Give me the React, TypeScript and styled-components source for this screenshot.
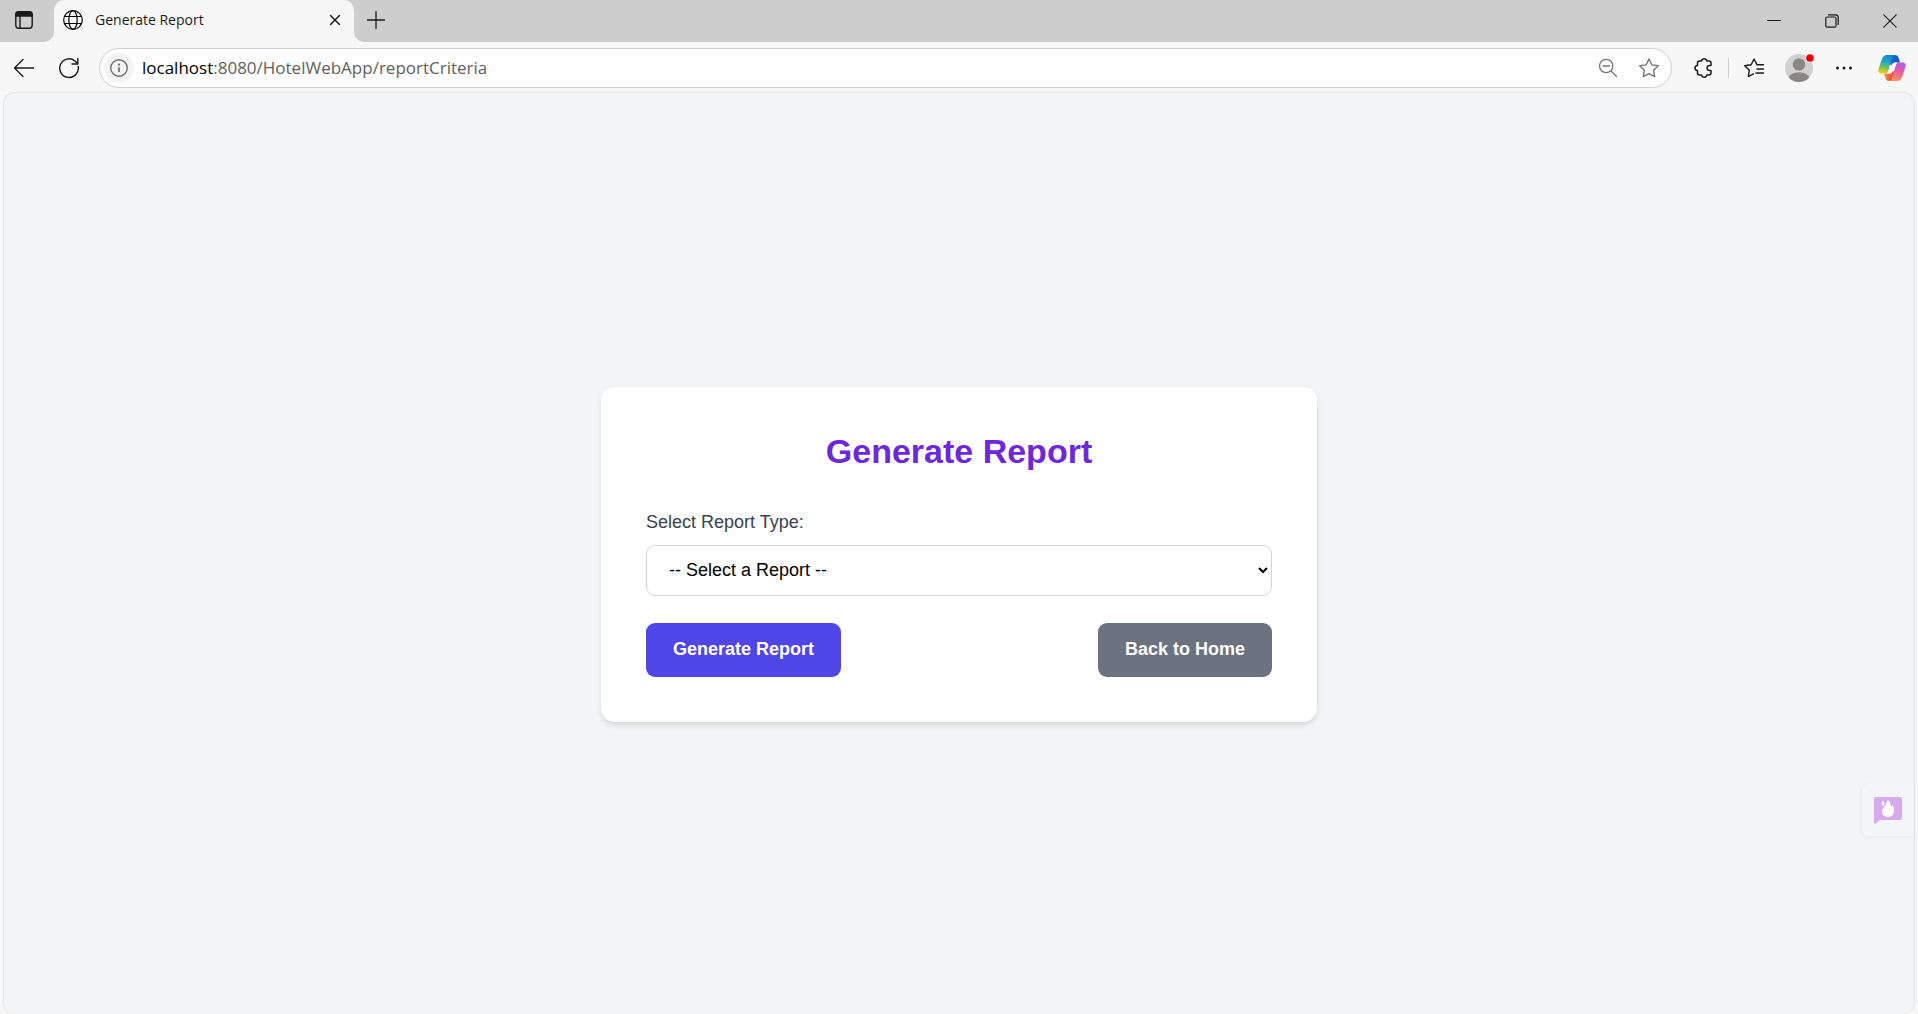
import React from 'react';
import styled, { createGlobalStyle } from 'styled-components';

const GlobalStyle = createGlobalStyle`
  *, *::before, *::after { box-sizing: border-box; }
  body { margin: 0; background: #f7f7f7; }
`;

const uiFont = '"Segoe UI", "Open Sans", "Noto Sans", sans-serif';
const pageFont = 'Arial, "Liberation Sans", sans-serif';

const Window = styled.div`
  display: flex;
  flex-direction: column;
  min-height: 100vh;
  background: #f7f7f7;
  font-family: ${uiFont};
`;

const IconButton = styled.button<{ $size?: number; $color?: string }>`
  display: flex;
  align-items: center;
  justify-content: center;
  flex: none;
  width: ${(p) => p.$size ?? 36}px;
  height: ${(p) => p.$size ?? 36}px;
  padding: 0;
  border: 0;
  border-radius: 6px;
  background: none;
  color: ${(p) => p.$color ?? '#1b1b1b'};
`;

const TitleBar = styled.header`
  display: flex;
  height: 42px;
`;

const StripStart = styled.div`
  display: flex;
  align-items: center;
  justify-content: center;
  width: 54px;
  padding: 0 6px 2px 0;
  border-radius: 0 0 10px 0;
  background: #cdcdcd;
`;

const TabSlot = styled.div`
  width: 300px;
  background: linear-gradient(#cdcdcd 50%, #f7f7f7 50%);
`;

const Tab = styled.div`
  display: flex;
  align-items: center;
  height: 40px;
  padding: 0 7px 0 8px;
  border-radius: 10px 10px 0 0;
  background: #f7f7f7;
`;

const TabTitle = styled.span`
  flex: 1;
  margin-left: 11px;
  color: #1b1b1b;
  font-size: 14px;
  line-height: 20px;
`;

const StripEnd = styled.div`
  display: flex;
  flex: 1;
  align-items: center;
  justify-content: space-between;
  padding-left: 8px;
  border-radius: 0 0 0 10px;
  background: #cdcdcd;
`;

const WindowControls = styled.div`
  display: flex;
`;

const WindowButton = styled(IconButton)`
  width: 58px;
  height: 42px;
  padding-left: 2px;
`;

const Toolbar = styled.nav`
  display: flex;
  align-items: center;
  height: 50px;
  padding: 1px 8px 0 6px;
`;

const ToolGroup = styled.div`
  display: flex;
  align-items: center;
  gap: 9px;
`;

const AddressBar = styled.div`
  display: flex;
  flex: 1;
  align-items: center;
  height: 40px;
  margin: 0 13px 0 12px;
  padding: 0 6px 0 4px;
  border: 1px solid #cfcfcf;
  border-radius: 20px;
  background: #fff;
`;

const SiteInfo = styled(IconButton)`
  width: 30px;
  height: 30px;
  border-radius: 15px;
  background: #f3f3f3;
  color: #707070;
`;

const Url = styled.span`
  flex: 1;
  margin-left: 8px;
  color: #5f5f5f;
  font-size: 17px;
  line-height: 24px;
`;

const Host = styled.span`
  color: #000;
`;

const Divider = styled.span`
  width: 1px;
  height: 20px;
  margin: 0 7px;
  background: #cdcdcd;
`;

const CopilotButton = styled(IconButton)`
  margin-left: 12px;
`;

const Viewport = styled.main`
  position: relative;
  display: flex;
  flex: 1;
  align-items: center;
  justify-content: center;
  margin: 0 3px;
  padding: 18px 16px 16px;
  border: 1px solid #e6e6e7;
  border-bottom: 0;
  border-radius: 12px;
  background: #f3f4f6;
  box-shadow: 0 0 2px rgba(0, 0, 0, 0.06);
`;

const Card = styled.section`
  width: 100%;
  max-width: 716px;
  padding: 45px;
  border-radius: 14px;
  background: #fff;
  box-shadow: 0 4px 7px -1px rgba(0, 0, 0, 0.1), 0 2px 4px -1px rgba(0, 0, 0, 0.06);
  font-family: ${pageFont};
`;

const Heading = styled.h1`
  margin: 0 0 39px;
  color: #6d28d9;
  font-size: 34px;
  line-height: 38px;
  text-align: center;
`;

const Label = styled.label`
  display: block;
  margin-bottom: 9px;
  color: #374151;
  font-size: 18px;
  line-height: 27px;
`;

const Select = styled.select`
  display: block;
  width: 100%;
  height: 51px;
  padding: 0 0 1px 18px;
  border: 1px solid #d1d5db;
  border-radius: 9px;
  background: #fff;
  color: #000;
  font-family: inherit;
  font-size: 18px;
`;

const Actions = styled.div`
  display: flex;
  justify-content: space-between;
  margin-top: 27px;
`;

const ActionButton = styled.button<{ $tone: string }>`
  height: 54px;
  padding: 0 27px 2px;
  border: 0;
  border-radius: 9px;
  background: ${(p) => p.$tone};
  color: #fff;
  font-family: inherit;
  font-size: 18px;
  font-weight: 700;
`;

const FeedbackButton = styled.button`
  position: absolute;
  right: 0;
  bottom: 178px;
  display: flex;
  align-items: center;
  width: 52px;
  height: 52px;
  padding: 0 12px;
  border: 0;
  border-radius: 6px 0 0 6px;
  background: #f4f5f7;
  box-shadow: -1px 1px 4px rgba(0, 0, 0, 0.05);
`;

type LineProps = { size: number; width?: number; children: React.ReactNode };

const Line = ({ size, width = 1.5, children }: LineProps) => (
  <svg
    width={size}
    height={size}
    viewBox={`0 0 ${size} ${size}`}
    fill="none"
    stroke="currentColor"
    strokeWidth={width}
    strokeLinecap="round"
    strokeLinejoin="round"
    aria-hidden="true"
  >
    {children}
  </svg>
);

const starPath = 'M11 2 L13.8 7.8 L20.3 8.7 L15.6 13.2 L16.7 19.6 L11 16.6 L5.3 19.6 L6.4 13.2 L1.7 8.7 L8.2 7.8 Z';

const CopilotLogo = () => (
  <svg width="30" height="28" viewBox="0 0 30 28" aria-hidden="true">
    <defs>
      <linearGradient id="copLeft" x1="0.5" y1="0" x2="0.3" y2="1">
        <stop offset="0" stopColor="#1687dc" />
        <stop offset="0.35" stopColor="#20a5cb" />
        <stop offset="0.65" stopColor="#6fbd62" />
        <stop offset="1" stopColor="#f3cf16" />
      </linearGradient>
      <linearGradient id="copTop" x1="0" y1="0" x2="1" y2="1">
        <stop offset="0" stopColor="#0f7bdc" />
        <stop offset="1" stopColor="#1545bd" />
      </linearGradient>
      <linearGradient id="copRight" x1="0.6" y1="0" x2="0.4" y2="1">
        <stop offset="0" stopColor="#ad5ced" />
        <stop offset="0.5" stopColor="#ec5c9e" />
        <stop offset="1" stopColor="#ff9258" />
      </linearGradient>
      <linearGradient id="copBottom" x1="0" y1="0" x2="1" y2="0.4">
        <stop offset="0" stopColor="#f7a340" />
        <stop offset="1" stopColor="#e54539" />
      </linearGradient>
    </defs>
    <path d="M12 1 H18 C20 1 21 2 21.6 4 L23 8.5 H18 C16 8.5 15 10 14.4 12 L12 8 Z" fill="url(#copTop)" />
    <path d="M18 27 H12 C10 27 9 26 8.4 24 L7 19.5 H12 C14 19.5 15 18 15.6 16 L18 20 Z" fill="url(#copBottom)" />
    <path d="M17.5 1 H10 C7 1 5.5 3 4.5 6 L1.6 15 C.5 18 2 19.5 4.5 19.5 H8 C10 19.5 10.8 18 11.4 16 L14.8 5 C15.4 2.8 16 1.5 17.5 1 Z" fill="url(#copLeft)" />
    <path d="M12.5 27 H20 C23 27 24.5 25 25.5 22 L28.4 13 C29.5 10 28 8.5 25.5 8.5 H22 C20 8.5 19.2 10 18.6 12 L15.2 23 C14.6 25.2 14 26.5 12.5 27 Z" fill="url(#copRight)" />
    <path d="M20.5 8.7 H18 C16 8.7 15 10 14.4 12 L13 16.6 C12.5 18.3 11.6 19.2 10 19.4 H12.2 C14.4 19.4 15.3 18.4 16 16.2 L17.8 11 C18.4 9.6 19 8.9 20.5 8.7 Z" fill="#fff" />
  </svg>
);

const Avatar = () => (
  <svg width="32" height="32" viewBox="0 0 32 32" aria-hidden="true">
    <defs>
      <clipPath id="avatarDisc"><circle cx="16" cy="16" r="14" /></clipPath>
    </defs>
    <circle cx="16" cy="16" r="14" fill="#d2d0ce" />
    <g clipPath="url(#avatarDisc)" fill="#8a8683">
      <circle cx="16" cy="12.5" r="6.2" />
      <ellipse cx="16" cy="26.5" rx="10.3" ry="6.2" />
    </g>
    <circle cx="27" cy="6" r="4.4" fill="#f7f7f7" />
    <circle cx="27" cy="6" r="3.8" fill="#e80000" />
  </svg>
);

const BrowserTabs = () => (
  <TitleBar>
    <StripStart>
      <IconButton aria-label="Tab actions">
        <Line size={20} width={1.4}>
          <rect x="1.8" y="1.8" width="16.4" height="16.4" rx="3" />
          <path d="M2 4.5 Q2 2 4.5 2 H15.5 Q18 2 18 4.5 V6 H2 Z" fill="currentColor" />
          <path d="M6 6 V18" />
        </Line>
      </IconButton>
    </StripStart>
    <TabSlot>
      <Tab>
        <Line size={22} width={1.2}>
          <circle cx="11" cy="11" r="9.3" />
          <ellipse cx="11" cy="11" rx="4.2" ry="9.3" />
          <path d="M2.5 7.5 H19.5 M2.5 14.5 H19.5" />
        </Line>
        <TabTitle>Generate Report</TabTitle>
        <IconButton $size={24} aria-label="Close tab">
          <Line size={12} width={1.5}><path d="M1.5 1.5 L10.5 10.5 M10.5 1.5 L1.5 10.5" /></Line>
        </IconButton>
      </Tab>
    </TabSlot>
    <StripEnd>
      <IconButton $size={28} aria-label="New tab">
        <Line size={20} width={1.3}><path d="M1.5 9 H18.5 M10 .7 V17.5" /></Line>
      </IconButton>
      <WindowControls>
        <WindowButton aria-label="Minimize">
          <Line size={14} width={1}><path d="M.5 6.5 H13.5" /></Line>
        </WindowButton>
        <WindowButton aria-label="Restore">
          <Line size={14} width={1.2}>
            <rect x=".8" y="3" width="10.2" height="10.2" rx="1.5" />
            <path d="M3.5 .8 H10.5 Q13.2 .8 13.2 3.5 V10.5" />
          </Line>
        </WindowButton>
        <WindowButton aria-label="Close window">
          <Line size={14} width={1.2}><path d="M.8 .8 L13.2 13.2 M13.2 .8 L.8 13.2" /></Line>
        </WindowButton>
      </WindowControls>
    </StripEnd>
  </TitleBar>
);

const BrowserToolbar = () => (
  <Toolbar>
    <ToolGroup>
      <IconButton aria-label="Back">
        <Line size={22} width={1.3}><path d="M20.5 11 H1.5 M10 2.5 L1.5 11 L10 19.5" /></Line>
      </IconButton>
      <IconButton aria-label="Refresh">
        <Line size={22} width={1.4}>
          <path d="M20.2 9.5 A9.3 9.3 0 1 1 17 4 L19.5 6.5" />
          <path d="M19.8 1.5 V7 H14" />
        </Line>
      </IconButton>
    </ToolGroup>
    <AddressBar>
      <SiteInfo aria-label="View site information">
        <Line size={20} width={1.4}>
          <circle cx="10" cy="10" r="8.3" />
          <path d="M10 9.2 V14" strokeWidth="1.8" strokeLinecap="butt" />
          <circle cx="10" cy="6.6" r=".5" />
        </Line>
      </SiteInfo>
      <Url><Host>localhost</Host>:8080/HotelWebApp/reportCriteria</Url>
      <ToolGroup>
        <IconButton $size={32} $color="#757575" aria-label="Zoom">
          <Line size={20} width={1.3}>
            <circle cx="8.2" cy="8" r="6.7" />
            <path d="M13 13 L18.5 18.5 M5 8 H11.5" />
          </Line>
        </IconButton>
        <IconButton $size={32} $color="#707070" aria-label="Add to favorites">
          <Line size={22} width={1.3}><path d={starPath} /></Line>
        </IconButton>
      </ToolGroup>
    </AddressBar>
    <IconButton aria-label="Extensions">
      <Line size={22} width={1.5}>
        <path d="M7.5 4 H9.6 Q9.9 1.8 12.2 1.8 Q14.500 1.8 14.800 4 H17 Q19 4 19 6 V8.500 H17.500 Q15 8.700 15 11 Q15 13.300 17.500 13.500 H19 V16 Q19 18 17 18 H14.800 Q14.500 20.200 12.200 20.200 Q9.900 20.200 9.600 18 H7.500 Q5.500 18 5.500 16 V13.700 Q3 13.400 3 11 Q3 8.700 5.500 8.400 V6 Q5.500 4 7.500 4 Z" />
      </Line>
    </IconButton>
    <Divider />
    <ToolGroup>
      <IconButton aria-label="Favorites">
        <Line size={22} width={1.4}>
          <path d="M14 7.7 L11 2 L8.2 7.8 L1.7 8.7 L6.4 13.2 L5.3 19.6 L10.5 16.8 M14 7.7 H20.5 M14 12 H20.5 M13 16 H20.5" />
        </Line>
      </IconButton>
      <IconButton aria-label="Profile"><Avatar /></IconButton>
      <IconButton aria-label="Settings and more">
        <svg width="20" height="20" viewBox="0 0 20 20" fill="#1b1b1b" aria-hidden="true">
          <circle cx="3.5" cy="10" r="1.5" />
          <circle cx="10" cy="10" r="1.5" />
          <circle cx="16.5" cy="10" r="1.5" />
        </svg>
      </IconButton>
    </ToolGroup>
    <CopilotButton aria-label="Copilot"><CopilotLogo /></CopilotButton>
  </Toolbar>
);

export default function App() {
  return (
    <Window>
      <GlobalStyle />
      <BrowserTabs />
      <BrowserToolbar />
      <Viewport>
        <Card>
          <Heading>Generate Report</Heading>
          <form onSubmit={(e) => e.preventDefault()}>
            <Label htmlFor="reportType">Select Report Type:</Label>
            <Select id="reportType" defaultValue="">
              <option value="">-- Select a Report --</option>
            </Select>
            <Actions>
              <ActionButton type="submit" $tone="#4f46e5">Generate Report</ActionButton>
              <ActionButton type="button" $tone="#6b7280">Back to Home</ActionButton>
            </Actions>
          </form>
        </Card>
        <FeedbackButton aria-label="Feedback">
          <svg width="28" height="27" viewBox="0 0 28 27" aria-hidden="true">
            <path d="M2 0 H26 Q28 0 28 2 V21 Q28 23 26 23 H6 L1.5 26.5 Q0 27 0 25 V2 Q0 0 2 0 Z" fill="#d8abef" />
            <path d="M13.5 3 C17.5 5 15.5 7.5 17.5 9.5 L18.3 8 C20 10 20 12 20 14 C20 17.5 17.5 20 14 20 C10.5 20 8 17.5 8 14.5 C8 11 10.5 10 11.5 8 C12.5 6.2 13 5 13.5 3 Z" fill="#fff" />
            <path d="M9 4 C11 5.5 11 7 9.5 9 C7 8 7 5.5 9 4 Z" fill="#fff" />
          </svg>
        </FeedbackButton>
      </Viewport>
    </Window>
  );
}
